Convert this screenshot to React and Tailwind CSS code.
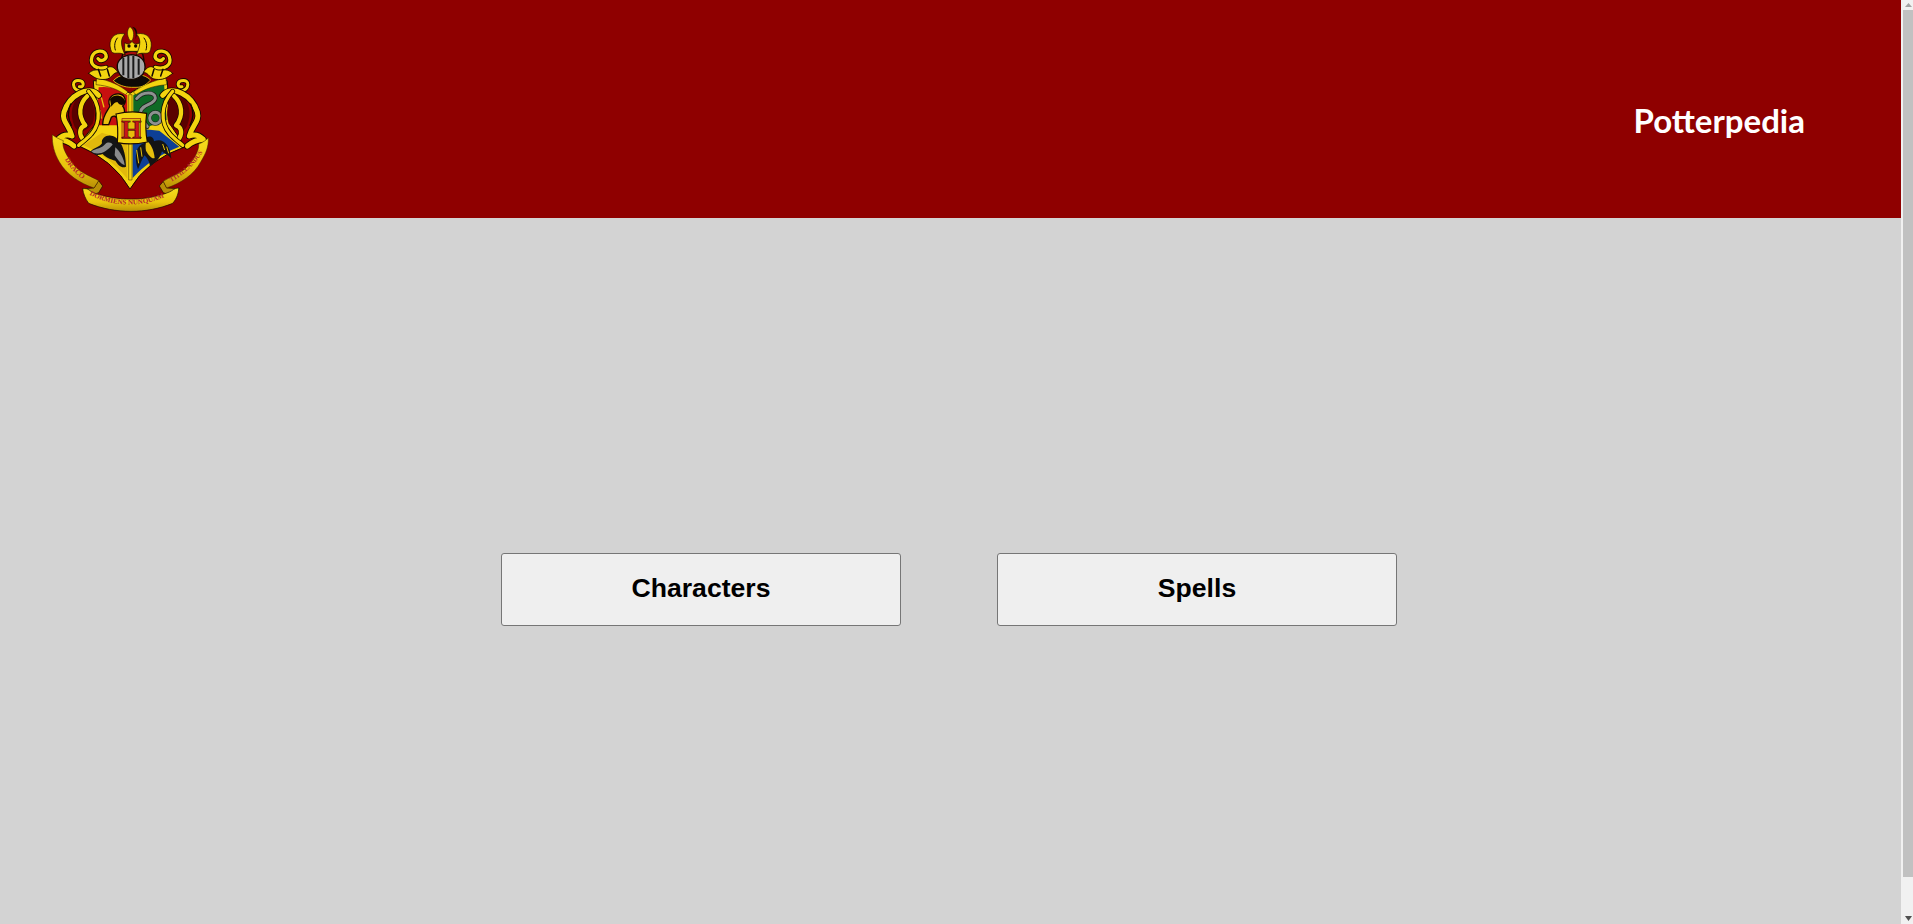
const GOLD = "#f3d40f";
const GOLD_DARK = "#b98f06";
const INK = "#120800";

// one side of the mantling, mirrored for the other side
function Mantling() {
  const upperScroll = "M228,172 C200,180 178,165 186,140 C194,120 222,118 228,135 C232,148 212,158 204,146";
  const topCurl = "M156,246 C122,238 124,206 150,212 C164,216 162,234 148,230";
  const outerArc = "M206,256 C176,222 118,256 102,306 C94,334 118,346 126,378 C112,372 96,376 84,388 C104,390 118,396 132,408";
  const innerArc = "M172,258 C148,280 142,316 166,346 C150,350 146,368 156,384";
  const frontArc = "M176,244 C212,282 214,338 184,372 C174,384 160,394 146,406";

  return (
    <g fill="none" strokeLinecap="round" strokeLinejoin="round">
      <path d="M285,134 C262,122 248,140 242,118 C234,90 250,64 285,72 C272,84 270,104 285,134 Z" fill={GOLD} stroke={INK} strokeWidth="2" />
      <path d="M262,84 C254,94 252,108 256,120" stroke={INK} strokeWidth="3" />
      <path d={upperScroll} stroke={INK} strokeWidth="15" />
      <path d={upperScroll} stroke={GOLD} strokeWidth="10" />
      <path d="M176,190 C196,168 216,190 232,174 C240,166 254,170 264,188 C248,186 246,207 226,208 C206,210 196,206 176,190 Z" fill={GOLD} stroke={INK} strokeWidth="2.5" />
      <path d="M205,178 L212,198 M232,178 L238,198" stroke={INK} strokeWidth="4.5" />
      <path d={topCurl} stroke={INK} strokeWidth="14" />
      <path d={topCurl} stroke={GOLD} strokeWidth="9" />
      <path d="M150,254 C128,274 116,310 134,350 C146,372 170,366 188,340 C198,310 192,272 172,250 Z" fill="#5a0200" />
      <path d={outerArc} stroke={INK} strokeWidth="20" />
      <path d={outerArc} stroke={GOLD} strokeWidth="15" />
      <path d="M122,282 C112,304 114,326 124,346" stroke={INK} strokeWidth="4" />
      <path d={innerArc} stroke={INK} strokeWidth="17" />
      <path d={innerArc} stroke={GOLD} strokeWidth="13" />
      <path d={frontArc} stroke={INK} strokeWidth="15" />
      <path d={frontArc} stroke={GOLD} strokeWidth="10" />
    </g>
  );
}

function Crest() {
  return (
    <svg viewBox="60 30 495 585" className="w-[165px] h-[195px] shrink-0 mt-5 self-start">
      <defs>
        <linearGradient id="ribbon" x1="0" y1="0" x2="0" y2="1">
          <stop offset="0" stopColor="#f6dc1e" />
          <stop offset="0.6" stopColor="#e9c40c" />
          <stop offset="1" stopColor={GOLD_DARK} />
        </linearGradient>
        <path id="draco" d="M104,448 C124,480 146,502 176,520" />
        <path id="dormiens" d="M178,554 C250,594 350,594 420,552" />
        <path id="titill" d="M424,516 C462,494 498,462 522,420" />
      </defs>

      {/* shield */}
      <path d="M190,212 Q250,212 300,250 Q350,212 412,212 L418,340 L466,410 Q350,450 300,537 Q250,450 143,406 L198,340 Z" fill={GOLD} stroke="#1a0a00" strokeWidth="3" />
      <path d="M206,232 Q254,226 292,256 L292,346 L200,346 Z" fill="#c8100f" />
      <path d="M310,256 Q350,226 402,220 L410,330 L350,352 L310,352 Z" fill="#0f6a26" />
      <path d="M160,405 L216,368 L292,392 L292,506 Q240,440 160,405 Z" fill="#e2b90c" />
      <path d="M308,392 L345,358 L388,362 L448,410 Q360,445 308,504 Z" fill="#0d3f96" />
      <path d="M296,254 L306,254 L306,510 L296,510 Z" fill={GOLD} stroke="#3a2400" strokeWidth="1.5" />
      <path d="M200,204 C240,212 270,226 294,246 L286,254 C258,236 236,228 198,224 Z" fill={GOLD} stroke="#1a0a00" strokeWidth="1.5" />
      <path d="M408,204 C368,212 338,226 310,246 L318,254 C346,236 368,228 410,224 Z" fill={GOLD} stroke="#1a0a00" strokeWidth="1.5" />

      {/* lion */}
      <path d="M218,344 C218,314 232,304 240,288 C230,270 244,250 268,252 C286,254 292,276 278,288 C288,300 284,322 270,336 L262,326 C258,318 252,316 244,322 L236,344 Z" fill="#e8bf0f" stroke={INK} strokeWidth="4" />
      <path d="M240,268 C248,252 280,252 286,276 C282,290 268,286 262,276 C254,276 248,286 244,290 Z" fill={INK} />
      <path d="M214,262 L222,292 M210,300 L214,326" stroke="#e8bf0f" strokeWidth="4" fill="none" />

      {/* snake */}
      <g fill="none" strokeLinecap="round">
        <path d="M320,266 C338,244 376,244 376,264 C376,284 334,282 332,306 C330,322 340,334 352,350" stroke="#1c1c1c" strokeWidth="13" />
        <path d="M320,266 C338,244 376,244 376,264 C376,284 334,282 332,306 C330,322 340,334 352,350" stroke="#8d9290" strokeWidth="9" />
        <circle cx="376" cy="324" r="17" stroke="#1c1c1c" strokeWidth="12" />
        <circle cx="376" cy="324" r="17" stroke="#8d9290" strokeWidth="9" />
      </g>

      {/* badger */}
      <path d="M182,424 C196,410 206,414 216,400 C212,384 232,372 248,378 C270,384 288,420 288,470 C276,476 264,466 256,452 C240,448 230,444 218,432 C206,436 192,438 182,424 Z" fill="#141414" />
      <path d="M184,424 C200,414 214,416 226,402 C232,396 244,396 248,404 C238,414 226,428 208,430 C198,432 190,430 184,424 Z" fill="#8a8a8a" />
      <path d="M256,412 C270,424 282,446 284,466 C272,462 262,448 254,436 Z" fill="#8a8a8a" />

      {/* eagle */}
      <path d="M350,382 C360,376 372,382 372,394 C396,382 420,400 424,446 C410,430 402,432 396,424 C390,446 378,456 360,470 C358,452 352,446 344,436 C336,446 330,466 324,478 C314,450 314,414 336,402 C344,400 350,396 350,382 Z" fill="#141414" />
      <path d="M350,392 C362,400 372,420 374,444 C366,448 356,436 348,422 C346,412 346,400 350,392 Z" fill="#e6c00d" />
      <path d="M320,420 L326,460 M332,412 L336,440 M398,402 L404,420 M410,410 L416,430" stroke="#e6c00d" strokeWidth="3" />

      {/* H plate */}
      <path d="M258,312 Q304,300 350,310 Q344,354 352,396 Q304,406 262,398 Q266,354 258,312 Z" fill={GOLD} stroke="#1a0a00" strokeWidth="3.5" />
      <rect x="276" y="326" width="56" height="60" fill="#e6bd0c" stroke="#8a1010" strokeWidth="2" />
      <text x="304" y="385" textAnchor="middle" fontFamily="'Liberation Serif', serif" fontWeight="700" fontSize="78" fill="#c8141a" stroke={INK} strokeWidth="1.5">H</text>

      {/* helmet and collar */}
      <path d="M250,212 C272,190 288,194 302,206 C318,192 340,190 362,210 C350,222 340,232 318,232 L304,232 C284,232 262,224 250,212 Z" fill="#0e0a06" stroke={GOLD} strokeWidth="2.5" />
      <path d="M278,132 C296,120 320,120 338,132 L342,150 L274,150 Z" fill="#a40d0d" stroke={INK} strokeWidth="4" />
      <path d="M264,182 C256,158 270,138 304,134 C334,136 350,154 344,182 C338,200 320,208 304,208 C286,208 270,200 264,182 Z" fill="#a9a9a9" stroke={INK} strokeWidth="4" />
      <path d="M280,144 L280,196 M295,138 L295,204 M310,138 L310,204 M326,146 L326,194" stroke="#1a1a1a" strokeWidth="6" />

      {/* crown and feather */}
      <path d="M284,124 L284,98 Q298,108 306,94 Q314,108 330,98 L330,124 Z" fill={GOLD} stroke={INK} strokeWidth="2" />
      <circle cx="297" cy="108" r="5" fill={INK} />
      <circle cx="317" cy="108" r="5" fill={INK} />
      <path d="M300,92 C290,76 290,60 300,50 C312,58 314,76 306,92 Z" fill={GOLD} stroke={INK} strokeWidth="1.5" />
      <path d="M316,88 C320,70 316,58 306,50 C324,52 324,74 316,88 Z" fill={INK} />

      <Mantling />
      <g transform="translate(604 0) scale(-1 1)">
        <Mantling />
      </g>

      {/* banner */}
      <path d="M192,534 L206,512 L218,528 L206,548 L172,560 L158,536 Z" fill={GOLD_DARK} stroke={INK} strokeWidth="2" />
      <path d="M410,534 L400,514 L388,528 L400,548 L434,560 L448,536 Z" fill={GOLD_DARK} stroke={INK} strokeWidth="2" />
      <path d="M67,374 C74,380 88,388 100,392 C94,410 110,440 136,470 C158,492 186,500 206,512 L192,534 C150,520 110,494 88,456 C72,428 66,402 67,374 Z" fill="url(#ribbon)" stroke="#3a2400" strokeWidth="1.5" />
      <path d="M535,384 C528,390 518,398 506,402 C508,424 488,456 464,478 C444,494 420,500 400,514 L410,534 C452,520 492,494 512,456 C528,430 536,410 535,384 Z" fill="url(#ribbon)" stroke="#3a2400" strokeWidth="1.5" />
      <path d="M158,536 C178,534 178,544 190,548 C260,574 350,574 418,546 C428,542 432,534 446,534 C446,550 440,566 428,580 C350,612 256,612 176,580 C166,566 160,552 158,536 Z" fill="url(#ribbon)" stroke="#1a0a00" strokeWidth="2" />
      <g fontFamily="'Liberation Serif', serif" fontSize="22" fontWeight="700" fill="#b5242a">
        <text><textPath href="#draco">DRACO</textPath></text>
        <text fontSize="21"><textPath href="#dormiens">DORMIENS NUNQUAM</textPath></text>
        <text fontSize="19"><textPath href="#titill">TITILLANDUS</textPath></text>
      </g>
    </svg>
  );
}

function Scrollbar() {
  return (
    <aside className="w-3 shrink-0 h-full pl-0.5 bg-[#f1f1f1] flex flex-col">
      <div className="h-2.5 flex items-center justify-center">
        <svg viewBox="0 0 7 4" className="w-[7px] h-1"><path d="M3.5,0 L7,4 L0,4 Z" fill="#a3a3a3" /></svg>
      </div>
      <div className="h-[867px] bg-[#c1c1c1]" />
      <div className="flex-1 flex items-end justify-center pb-[3px]">
        <svg viewBox="0 0 7 5" className="w-[7px] h-[5px]"><path d="M0,0 L7,0 L3.5,5 Z" fill="#505050" /></svg>
      </div>
    </aside>
  );
}

export default function App() {
  return (
    <div className="h-screen flex overflow-hidden bg-[#d3d3d3] font-['Liberation_Sans',sans-serif]">
      <div className="flex-1 min-w-0">
        <header className="h-[218px] bg-[#8f0000] flex items-center justify-between pl-[50px] pr-[96px]">
          <Crest />
          <h1 className="font-['Lato',sans-serif] font-bold text-[33px] text-white mt-[23px]">Potterpedia</h1>
        </header>

        <main className="h-[743px] flex items-center justify-center gap-24 pr-[3px]">
          <button className="w-[400px] h-[73px] pb-px bg-[#efefef] border border-[#767676] rounded-[3px] text-[26.6px] font-bold text-black">
            Characters
          </button>
          <button className="w-[400px] h-[73px] pb-px bg-[#efefef] border border-[#767676] rounded-[3px] text-[26.6px] font-bold text-black">
            Spells
          </button>
        </main>
      </div>
      <Scrollbar />
    </div>
  );
}
